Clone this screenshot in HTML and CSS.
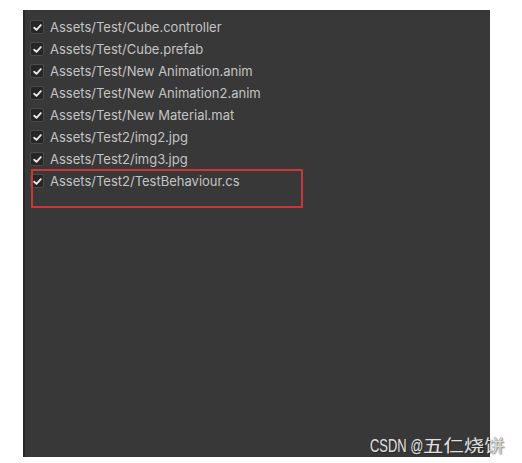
FILE: index.html
```html
<!DOCTYPE html>
<html>
<head>
<meta charset="utf-8">
<link rel="stylesheet" href="styles.css">
</head>
<body>
<div class="panel">
  <div class="list">
    <div class="row"><span class="cb"><svg viewBox="0 0 10 10"><path d="M2 5.2 L4.1 7.2 L8 2.8" /></svg></span><span class="label">Assets/Test/Cube.controller</span></div>
    <div class="row"><span class="cb"><svg viewBox="0 0 10 10"><path d="M2 5.2 L4.1 7.2 L8 2.8" /></svg></span><span class="label">Assets/Test/Cube.prefab</span></div>
    <div class="row"><span class="cb"><svg viewBox="0 0 10 10"><path d="M2 5.2 L4.1 7.2 L8 2.8" /></svg></span><span class="label">Assets/Test/New Animation.anim</span></div>
    <div class="row"><span class="cb"><svg viewBox="0 0 10 10"><path d="M2 5.2 L4.1 7.2 L8 2.8" /></svg></span><span class="label">Assets/Test/New Animation2.anim</span></div>
    <div class="row"><span class="cb"><svg viewBox="0 0 10 10"><path d="M2 5.2 L4.1 7.2 L8 2.8" /></svg></span><span class="label">Assets/Test/New Material.mat</span></div>
    <div class="row"><span class="cb"><svg viewBox="0 0 10 10"><path d="M2 5.2 L4.1 7.2 L8 2.8" /></svg></span><span class="label">Assets/Test2/img2.jpg</span></div>
    <div class="row"><span class="cb"><svg viewBox="0 0 10 10"><path d="M2 5.2 L4.1 7.2 L8 2.8" /></svg></span><span class="label">Assets/Test2/img3.jpg</span></div>
    <div class="row"><span class="cb"><svg viewBox="0 0 10 10"><path d="M2 5.2 L4.1 7.2 L8 2.8" /></svg></span><span class="label">Assets/Test2/TestBehaviour.cs</span></div>
  </div>
  <div class="highlight"></div>
</div>
<div class="watermark"><span class="wm-latin"><span class="wm-latin-inner">CSDN @</span></span><span class="wm-cjk"><span class="wm-cjk-inner">五仁烧饼</span></span></div>
</body>
</html>
```
FILE: styles.css
```css
html, body {
  margin: 0;
  padding: 0;
  background: #ffffff;
  width: 522px;
  height: 463px;
  overflow: hidden;
  position: relative;
}
.panel {
  position: absolute;
  left: 23px;
  top: 10px;
  width: 467px;
  height: 447px;
  background: #383838;
  border-left: 2px solid #282828;
  box-sizing: border-box;
}
.list {
  padding-top: 6px;
  padding-left: 5px;
  display: flex;
  flex-direction: column;
}
.row {
  height: 22px;
  display: flex;
  align-items: center;
  gap: 6px;
}
.cb {
  width: 14px;
  height: 14px;
  background: #262626;
  border: 1px solid #4a4a4a;
  border-radius: 2px;
  box-sizing: border-box;
  display: flex;
  align-items: center;
  justify-content: center;
}
.cb svg {
  width: 11px;
  height: 11px;
  fill: none;
  stroke: #e6e6e6;
  stroke-width: 1.7;
  stroke-linecap: round;
  stroke-linejoin: round;
}
.label {
  font-family: Inter, "Liberation Sans", sans-serif;
  font-size: 13px;
  color: #c4c4c4;
  white-space: nowrap;
}
.highlight {
  position: absolute;
  left: 6px;
  top: 159px;
  width: 272px;
  height: 39px;
  border: 2px solid #c83838;
  box-sizing: border-box;
}
.watermark {
  position: absolute;
  left: 370px;
  top: 432px;
  display: flex;
  align-items: baseline;
  white-space: nowrap;
  color: #dedede;
  text-shadow: 0 0 1px #555, 1px 1px 1px rgba(0,0,0,0.35);
}
.wm-latin {
  display: inline-block;
  width: 53px;
  font-family: "Liberation Sans", sans-serif;
  font-size: 19px;
}
.wm-latin-inner {
  display: inline-block;
  transform: scaleX(0.68);
  transform-origin: left center;
}
.wm-cjk {
  display: inline-block;
  width: 84px;
  font-family: "Noto Sans CJK SC", sans-serif;
  font-size: 17px;
}
.wm-cjk-inner {
  display: inline-block;
  transform: scaleX(1.2);
  transform-origin: left center;
}
```
